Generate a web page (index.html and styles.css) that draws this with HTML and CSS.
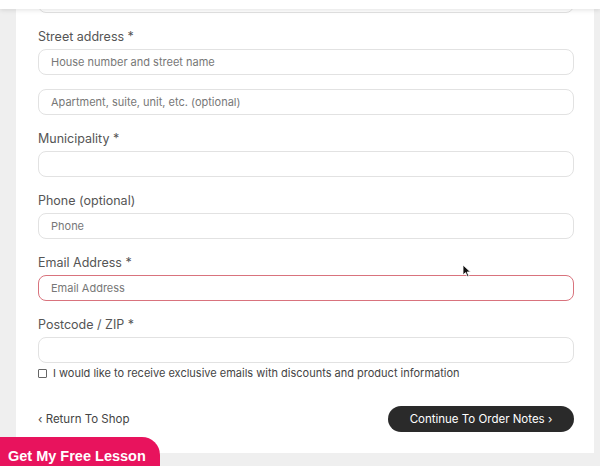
FILE: index.html
```html
<!DOCTYPE html>
<html lang="en">
<head>
<meta charset="utf-8">
<title>Checkout</title>
<link rel="stylesheet" href="styles.css">
</head>
<body>
<header class="topbar"></header>
<main class="card">
  <div class="input partial"></div>
  <div class="field">
    <label class="label">Street address *</label>
    <div class="input"><span class="ph">House number and street name</span></div>
    <div class="input second"><span class="ph">Apartment, suite, unit, etc. (optional)</span></div>
  </div>
  <div class="field">
    <label class="label">Municipality *</label>
    <div class="input"></div>
  </div>
  <div class="field">
    <label class="label">Phone (optional)</label>
    <div class="input"><span class="ph">Phone</span></div>
  </div>
  <div class="field">
    <label class="label">Email Address *</label>
    <div class="input error"><span class="ph">Email Address</span></div>
  </div>
  <div class="field">
    <label class="label">Postcode / ZIP *</label>
    <div class="input"></div>
  </div>
  <div class="check-row">
    <span class="checkbox"></span>
    <span class="check-text">I would like to receive exclusive emails with discounts and product information</span>
  </div>
  <div class="actions">
    <a class="back">&lsaquo; Return To Shop</a>
    <button class="continue">Continue To Order Notes <span class="chev">&rsaquo;</span></button>
  </div>
</main>
<a class="promo">Get My Free Lesson</a>
<svg class="cursor" width="10" height="14" viewBox="0 0 10 14"><path d="M1 1 L1 11 L3.5 8.6 L5.3 12.6 L6.9 11.9 L5.1 8 L8.5 8 Z" fill="#111" stroke="#fff" stroke-width="0.8"/></svg>
</body>
</html>
```
FILE: styles.css
```css
* { box-sizing: border-box; }
html, body { margin: 0; padding: 0; }
body {
  background: #efefef;
  width: 600px;
  height: 466px;
  overflow: hidden;
  font-family: Inter, "Open Sans", sans-serif;
}
.topbar {
  position: fixed;
  top: 0; left: 0; right: 0;
  height: 9px;
  background: #fff;
  box-shadow: 0 1px 5px rgba(0,0,0,0.12);
  z-index: 5;
}
.card {
  margin-left: 16px;
  width: 578px;
  height: 453px;
  background: #fff;
  padding: 0 20px 0 22px;
  display: flex;
  flex-direction: column;
}
.input {
  height: 26px;
  border: 1px solid #e2e2e2;
  border-radius: 8px;
  display: flex;
  align-items: center;
  padding-left: 12px;
  background: #fff;
}
.input.partial { margin-top: -13px; }
.input.second { margin-top: 14px; }
.input.error { border-color: #d9737d; }
.ph {
  font-size: 11px;
  color: #777;
}
.field {
  display: flex;
  flex-direction: column;
  margin-top: 15px;
}
.label {
  font-size: 12.5px;
  line-height: 16px;
  padding-top: 1px;
  color: #555;
  margin-bottom: 4px;
}
.check-row {
  display: flex;
  align-items: center;
  margin-top: 4px;
  height: 12px;
  gap: 6px;
}
.checkbox {
  width: 9px;
  height: 9px;
  border: 1px solid #666;
  border-radius: 1px;
}
.check-text {
  font-size: 11px;
  color: #444;
}
.actions {
  display: flex;
  justify-content: space-between;
  align-items: center;
  margin-top: 27px;
}
.back {
  font-size: 11.5px;
  color: #444;
}
.continue {
  width: 186px;
  height: 26px;
  border: none;
  border-radius: 13px;
  background: #2a2a2a;
  color: #fff;
  font-family: Inter, "Open Sans", sans-serif;
  font-size: 11.5px;
  padding: 0;
}
.promo {
  position: fixed;
  left: 0;
  bottom: 0;
  width: 160px;
  height: 29px;
  background: #e8135d;
  border-radius: 0 18px 0 0;
  color: #fff;
  font-family: "Liberation Sans", Arial, sans-serif;
  font-weight: bold;
  font-size: 14.5px;
  line-height: 17px;
  padding: 11px 0 0 8px;
}
.cursor {
  position: fixed;
  left: 462px;
  top: 264px;
}
```
